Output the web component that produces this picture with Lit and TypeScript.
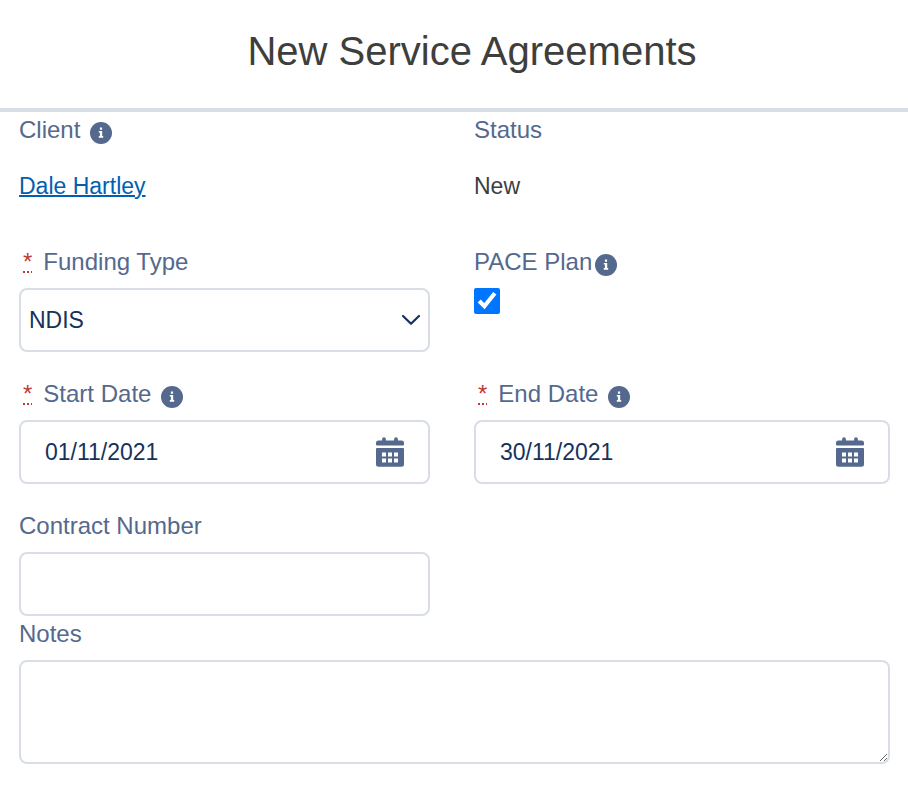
import { LitElement, html, css } from "lit";
import { customElement, property } from "lit/decorators.js";

@customElement("info-button")
class InfoButton extends LitElement {
  @property() label = "";

  static styles = css`
    :host {
      display: inline-flex;
    }
    .info {
      display: block;
      width: 22px;
      height: 22px;
      padding: 0;
      border: 0;
      background: none;
      color: #54698d;
      cursor: pointer;
    }
    .glyph {
      display: block;
      width: 22px;
      height: 22px;
    }
  `;

  render() {
    return html`<button class="info" type="button" aria-label=${this.label}>
      <svg class="glyph" viewBox="0 0 22 22" aria-hidden="true">
        <circle cx="11" cy="11" r="11" fill="currentColor" />
        <path
          fill="#fff"
          d="M9.900 5.500h2.200v2.200H9.900zM8.800 8.900h3.400v5.200h1v1.700H8.800v-1.700h1.100V10.600H8.800z"
        />
      </svg>
    </button>`;
  }
}

@customElement("app-root")
export class AppRoot extends LitElement {
  static styles = css`
    :host {
      display: block;
      background: #fff;
      color: #16325c;
      font-family: "Liberation Sans", Arial, sans-serif;
      font-size: 23px;
    }
    .header {
      padding: 24px 0 30px 36px;
      border-bottom: 4px solid #d8dde6;
    }
    .title {
      margin: 0;
      color: #3e3e3c;
      font-size: 40px;
      font-weight: 400;
      line-height: 54px;
      text-align: center;
    }
    .form {
      padding: 0 18px 0 19px;
    }
    .grid {
      display: grid;
      grid-template-columns: 411fr 416fr;
      column-gap: 44px;
      row-gap: 24px;
    }
    .field {
      display: flex;
      flex-direction: column;
      gap: 8px;
      min-width: 0;
    }
    .caption {
      display: flex;
      align-items: center;
      gap: 10px;
      height: 36px;
      color: #54698d;
      font-size: 24px;
      line-height: 36px;
    }
    .tight {
      gap: 3px;
    }
    .caption info-button {
      margin-top: 6px;
    }
    .required {
      margin: 0 11px 0 4px;
      color: #c23934;
      text-decoration: underline dotted 2px;
    }
    .value {
      height: 64px;
      color: #3e3e3c;
      line-height: 60px;
    }
    .link {
      color: #005fb2;
      text-decoration: underline 2px;
    }
    .control {
      position: relative;
      display: flex;
    }
    .input {
      box-sizing: border-box;
      width: 100%;
      height: 64px;
      margin: 0;
      padding: 0 8px;
      border: 2px solid #d8dde6;
      border-radius: 8px;
      background: #fff;
      color: #16325c;
      font: inherit;
    }
    .select {
      appearance: none;
    }
    .date {
      padding: 0 64px 0 24px;
    }
    .notes {
      display: block;
      height: 104px;
      padding: 12px 24px;
      resize: both;
    }
    .chevron {
      position: absolute;
      top: 26px;
      right: 9px;
      width: 20px;
      height: 12px;
      pointer-events: none;
    }
    .calendar {
      position: absolute;
      top: 17px;
      right: 26px;
      width: 28px;
      height: 30px;
      padding: 0;
      border: 0;
      background: none;
      color: #54698d;
      cursor: pointer;
    }
    .calendar-glyph {
      display: block;
      width: 28px;
      height: 30px;
    }
    .check {
      width: 26px;
      height: 26px;
      margin: 0;
    }
  `;

  private required() {
    return html`<abbr class="required" title="required">*</abbr>`;
  }

  private dateField(id: string, label: string, value: string) {
    return html`<div class="field">
      <div class="caption">
        <label for=${id}>${this.required()}${label}</label>
        <info-button label="${label} help"></info-button>
      </div>
      <div class="control">
        <input class="input date" id=${id} type="text" .value=${value} required />
        <button class="calendar" type="button" aria-label="Select ${label}">
          <svg class="calendar-glyph" viewBox="0 0 28 30" aria-hidden="true">
            <path
              fill="currentColor"
              d="M8 0.300a1.900 1.900 0 0 1 1.900 1.900V3.500h8.200V2.200a1.900 1.900 0 0 1 3.800 0V3.500h3.600A2.500 2.500 0 0 1 28 6v1.400a1 1 0 0 1-1 1H1a1 1 0 0 1-1-1V6A2.500 2.500 0 0 1 2.500 3.500H6.100V2.200A1.900 1.900 0 0 1 8 0.300z"
            />
            <path
              fill="currentColor"
              fill-rule="evenodd"
              d="M1 11h26a1 1 0 0 1 1 1v15.300a2.500 2.500 0 0 1-2.500 2.500h-23A2.500 2.500 0 0 1 0 27.300V12a1 1 0 0 1 1-1zM6 15.400v4h4v-4zM12 15.400v4h4v-4zM18 15.400v4h4v-4zM6 21.600v4h4v-4zM12 21.600v4h4v-4zM18 21.600v4h4v-4z"
            />
          </svg>
        </button>
      </div>
    </div>`;
  }

  render() {
    return html`
      <header class="header"><h1 class="title">New Service Agreements</h1></header>
      <form class="form">
        <div class="grid">
          <div class="field">
            <div class="caption">
              <span>Client</span><info-button label="Client help"></info-button>
            </div>
            <div class="value"><a class="link" href="#client">Dale Hartley</a></div>
          </div>
          <div class="field">
            <div class="caption">Status</div>
            <div class="value">New</div>
          </div>
          <div class="field">
            <div class="caption">
              <label for="funding">${this.required()}Funding Type</label>
            </div>
            <div class="control">
              <select class="input select" id="funding" required>
                <option>NDIS</option>
              </select>
              <svg class="chevron" viewBox="0 0 20 12" aria-hidden="true">
                <path
                  d="M2 2l8 7.800L18 2"
                  fill="none"
                  stroke="#16325c"
                  stroke-width="2.200"
                  stroke-linecap="round"
                  stroke-linejoin="round"
                />
              </svg>
            </div>
          </div>
          <div class="field">
            <div class="caption tight">
              <label for="pace">PACE Plan</label>
              <info-button label="PACE Plan help"></info-button>
            </div>
            <input class="check" id="pace" type="checkbox" checked />
          </div>
          ${this.dateField("start", "Start Date", "01/11/2021")}
          ${this.dateField("end", "End Date", "30/11/2021")}
          <div class="field">
            <label class="caption" for="contract">Contract Number</label>
            <input class="input" id="contract" type="text" />
          </div>
        </div>
        <div class="field">
          <label class="caption" for="notes">Notes</label>
          <textarea class="input notes" id="notes"></textarea>
        </div>
      </form>
    `;
  }
}
